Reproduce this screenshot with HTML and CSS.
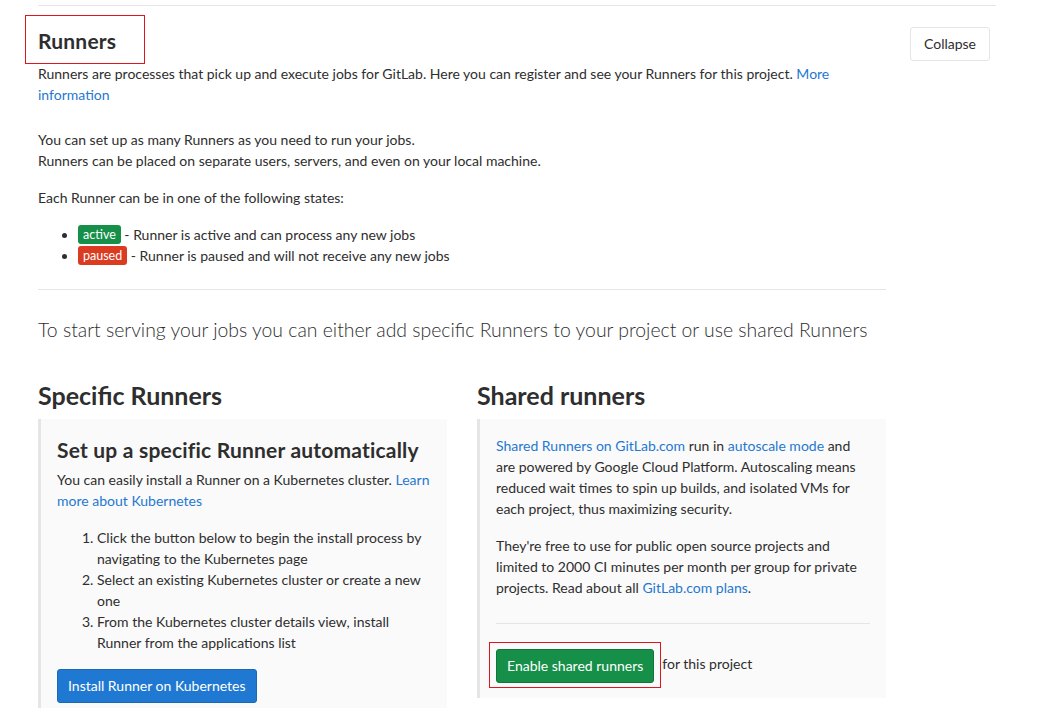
FILE: index.html
```html
<!DOCTYPE html>
<html>
<head>
<meta charset="utf-8">
<link rel="stylesheet" href="styles.css">
</head>
<body>
<div class="page">
  <section class="settings">
    <div class="settings-header">
      <div class="header-text">
        <h4 class="title"><span class="title-mark">Runners</span></h4>
        <p class="intro">Runners are processes that pick up and execute jobs for GitLab. Here you can register and see your Runners for this project. <a href="#">More information</a></p>
      </div>
      <button class="btn btn-default">Collapse</button>
    </div>
    <div class="settings-content">
      <p class="para">You can set up as many Runners as you need to run your jobs.<br>Runners can be placed on separate users, servers, and even on your local machine.</p>
      <p class="para">Each Runner can be in one of the following states:</p>
      <ul class="states">
        <li><span class="badge badge-success">active</span> - Runner is active and can process any new jobs</li>
        <li><span class="badge badge-danger">paused</span> - Runner is paused and will not receive any new jobs</li>
      </ul>
      <hr class="divider">
      <p class="lead">To start serving your jobs you can either add specific Runners to your project or use shared Runners</p>
      <div class="columns">
        <div class="col">
          <h3 class="col-title">Specific Runners</h3>
          <div class="bs-callout">
            <h4 class="callout-title">Set up a specific Runner automatically</h4>
            <p class="callout-text">You can easily install a Runner on a Kubernetes cluster. <a href="#">Learn more about Kubernetes</a></p>
            <ol class="steps">
              <li>Click the button below to begin the install process by navigating to the Kubernetes page</li>
              <li>Select an existing Kubernetes cluster or create a new one</li>
              <li>From the Kubernetes cluster details view, install Runner from the applications list</li>
            </ol>
            <button class="btn btn-info">Install Runner on Kubernetes</button>
          </div>
        </div>
        <div class="col">
          <h3 class="col-title">Shared runners</h3>
          <div class="bs-callout shared">
            <p class="callout-text"><a href="#">Shared Runners on GitLab.com</a> run in <a href="#">autoscale mode</a> and are powered by Google Cloud Platform. Autoscaling means reduced wait times to spin up builds, and isolated VMs for each project, thus maximizing security.</p>
            <p class="callout-text">They're free to use for public open source projects and limited to 2000 CI minutes per month per group for private projects. Read about all <a href="#">GitLab.com plans</a>.</p>
            <hr class="inner-hr">
            <div class="enable-row">
              <span class="btn-mark"><button class="btn btn-success">Enable shared runners</button></span>
              <span class="for-text">for this project</span>
            </div>
          </div>
        </div>
      </div>
    </div>
  </section>
</div>
</body>
</html>
```

FILE: styles.css
```css
* { box-sizing: border-box; }
html, body { margin: 0; padding: 0; background: #fff; }
body {
  font-family: "Lato", "Noto Sans", sans-serif;
  font-size: 14px;
  line-height: 21px;
  color: #2e2e2e;
}
a { color: #1f78d1; text-decoration: none; }
.page { padding: 0 0 0 38px; width: 996px; }
.settings { border-top: 1px solid #e5e5e5; margin-top: 5px; width: 958px; }
.settings-header {
  display: flex;
  justify-content: space-between;
  align-items: flex-start;
  padding-top: 20px;
}
.header-text { width: 800px; }
.title {
  margin: 0;
  font-size: 21px;
  line-height: 30px;
  font-weight: 700;
  letter-spacing: 0.2px;
}
.title-mark { display: inline-block; position: relative; }
.title-mark::after {
  content: "";
  position: absolute;
  left: -13px; top: -11px;
  width: 118px; height: 47px;
  border: 1px solid #e0161f;
}
.intro { margin: 7px 0 0; }
.btn {
  font-family: inherit;
  font-size: 14px;
  line-height: 20px;
  padding: 6px 14px;
  border-radius: 3px;
  border: 1px solid #e5e5e5;
  cursor: pointer;
}
.btn-default { background: #fff; color: #2e2e2e; height: 34px; margin: 1px 6px 0 0; width: 80px; padding: 6px 0; }
.settings-content { width: 848px; }
.para { margin: 24px 0 0; }
.para + .para { margin-top: 16px; }
.states { margin: 16px 0 0; padding-left: 40px; }
.states li { line-height: 21px; }
.badge {
  display: inline-block;
  vertical-align: top;
  margin-top: 1px;
  font-size: 12.5px;
  line-height: 13px;
  padding: 3px 5px;
  border-radius: 3px;
  color: #fff;
}
.badge-success { background: #168f48; }
.badge-danger { background: #db3b21; }
.divider { border: 0; border-top: 1px solid #e5e5e5; margin: 23px 0 0; }
.lead { margin: 25px 0 0; font-size: 19.4px; line-height: 30px; font-weight: 300; color: #2e2e2e; white-space: nowrap; }
.columns { display: flex; gap: 30px; margin-top: 35px; }
.col { flex: 1; }
.col-title { margin: 0; font-size: 25px; line-height: 30px; font-weight: 700; }
.bs-callout {
  margin-top: 9px;
  background: #fafafa;
  border-left: 3px solid #e5e5e5;
  padding: 16px 16px 6px;
}
.callout-title { margin: 0 0 4px; font-size: 21px; line-height: 30px; font-weight: 700; letter-spacing: 0.2px; }
.callout-text { margin: 0; }
.bs-callout.shared { padding: 16px 16px 15px; }
.shared .callout-text + .callout-text { margin-top: 16px; }
.steps { margin: 16px 0 16px; padding-left: 40px; }
.btn-info { background: #1f78d1; border-color: #1b69b6; color: #fff; padding: 6px 10px; }
.inner-hr { border: 0; border-top: 1px solid #e5e5e5; margin: 25px 0 25px; }
.enable-row { display: flex; align-items: center; gap: 8px; }
.btn-mark { position: relative; display: inline-block; }
.btn-mark::after {
  content: "";
  position: absolute;
  left: -7px; top: -7px; right: -7px; bottom: -5px;
  border: 1px solid #e0161f;
  pointer-events: none;
}
.btn-success { background: #168f48; border-color: #12753a; color: #fff; padding: 6px 10px; }
.for-text { margin-bottom: 5px; }
```
